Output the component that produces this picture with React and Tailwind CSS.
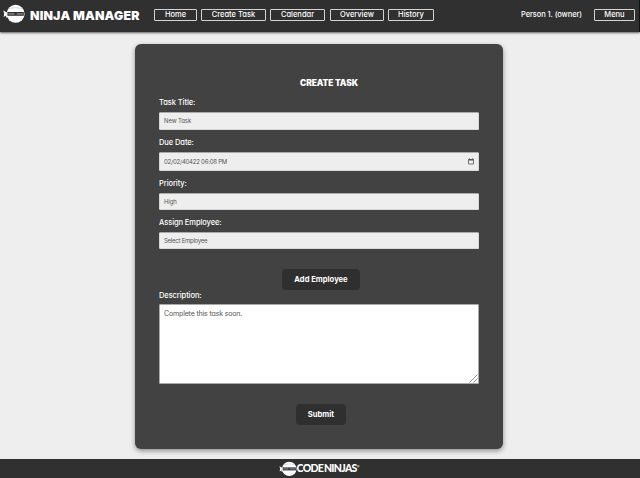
import React from 'react';

function NinjaHead({ className }) {
  return (
    <svg className={className} viewBox="0 0 22 20" fill="none">
      <path d="M5 9 L0.2 6.6 L1.2 9.5 L0.6 13 L3 11.5 L3.2 14 L6 11 Z" fill="#fff" />
      <circle cx="12.6" cy="9.8" r="9" fill="#fff" />
      <path d="M4.4 8 H20.8 V11.8 H4.4 Z" fill="#303030" />
      <path d="M5.4 9.3 H19.8 V10.5 H5.4 Z" fill="#999" />
      <path d="M11.4 9 H13.8 V10.8 H11.4 Z" fill="#303030" />
      <path d="M6 4.5 Q12.6 2.8 19.5 4.5" stroke="#bbb" strokeWidth="0.6" />
    </svg>
  );
}

const navItems = [
  { label: 'Home', width: 'w-[43px]', gap: '' },
  { label: 'Create Task', width: 'w-[65px]', gap: 'ml-1' },
  { label: 'Calendar', width: 'w-[55px]', gap: 'ml-1' },
  { label: 'Overview', width: 'w-[54px]', gap: 'ml-[5px]' },
  { label: 'History', width: 'w-[46px]', gap: 'ml-1' },
];

function NavButton({ children, className }) {
  return (
    <button className={`flex h-3 shrink-0 items-center justify-center rounded-[1px] border border-[#d4d4d4] text-[7.5px] leading-none font-medium whitespace-nowrap text-white ${className}`}>
      {children}
    </button>
  );
}

function Label({ children, className }) {
  return <label className={`block h-3 text-[7.5px] leading-[14px] font-medium tracking-[-0.08px] text-white ${className}`}>{children}</label>;
}

function Field({ children, className }) {
  return (
    <div className={`flex items-center justify-between rounded-[1.5px] border border-[#d8d8d8] border-t-[#aaa] bg-[#eee] px-1 text-[6px] leading-none tracking-[-0.12px] text-[#555] ${className}`}>
      {children}
    </div>
  );
}

function ActionButton({ children, className }) {
  return (
    <button className={`mx-auto flex h-[21px] items-center justify-center rounded-[4px] bg-[#2f2f2f] text-[7.6px] leading-none font-bold text-white ${className}`}>
      {children}
    </button>
  );
}

export default function App() {
  return (
    <div className="flex h-[478px] w-[640px] flex-col overflow-hidden bg-[#eee] font-['Inter','Open_Sans',sans-serif] [font-feature-settings:'cv11']">
      <header className="flex h-8 shrink-0 items-center border-r border-[#111] bg-[#303030] pr-[4px] pb-[2px] pl-[3px] shadow-[0_1px_2px_rgba(0,0,0,0.6)]">
        <NinjaHead className="-mt-[2px] h-5 w-[22px] shrink-0" />
        <h1 className="ml-[5px] w-[124px] shrink-0 pt-[2px] text-[12.3px] leading-none font-black tracking-[0.2px] whitespace-nowrap text-white">NINJA MANAGER</h1>
        <nav className="flex">
          {navItems.map((item) => (
            <NavButton key={item.label} className={`${item.width} ${item.gap}`}>{item.label}</NavButton>
          ))}
        </nav>
        <span className="mr-3 ml-auto text-[7.5px] leading-none font-medium tracking-[-0.08px] text-white">Person 1. (owner)</span>
        <NavButton className="w-[41px]">Menu</NavButton>
      </header>

      <main className="flex-1 pt-3">
        <form className="mx-auto h-[405px] w-[368px] -translate-x-px rounded-[6px] bg-[#424242] px-6 pt-8 shadow-[0_2px_5px_rgba(0,0,0,0.4)]">
          <h2 className="h-4 pl-[20px] text-center text-[8.4px] leading-[15px] font-black tracking-[-0.06px] text-white">CREATE TASK</h2>
          <Label className="mt-[4px]">Task Title:</Label>
          <Field className="mt-1 h-[18px]">New Task</Field>
          <Label className="mt-[6px]">Due Date:</Label>
          <Field className="mt-1 h-[19px]">
            <span className="tracking-[-0.22px]">02/02/40422 06:08 PM</span>
            <svg className="h-[7px] w-[6px]" viewBox="0 0 6 7" fill="none">
              <path d="M0.5 1.5 H5.5 V6 H0.5 Z M1.5 0.3 V1.5 M4.5 0.3 V1.5" stroke="#555" strokeWidth="0.8" />
              <path d="M0.5 1 H5.5 V2.5 H0.5 Z" fill="#555" />
            </svg>
          </Field>
          <Label className="mt-[6px]">Priority:</Label>
          <Field className="mt-1 h-[17px]">High</Field>
          <Label className="mt-[6px]">Assign Employee:</Label>
          <Field className="mt-1 h-[17px]"><span className="tracking-[-0.25px]">Select Employee</span></Field>
          <ActionButton className="mt-5 w-[78px] translate-x-[2px]">Add Employee</ActionButton>
          <Label className="-mt-px">Description:</Label>
          <div className="mt-[3px] flex h-20 justify-between rounded-[1px] border border-[#aaa] bg-white pt-[3px] pl-1">
            <span className="text-[7px] leading-[11px] tracking-[-0.15px] text-[#555]">Complete this task soon.</span>
            <svg className="h-[9px] w-[9px] self-end" viewBox="0 0 9 9">
              <path d="M0.5 8.5 L8.5 0.5 M4.5 8.5 L8.5 4.5" stroke="#777" strokeWidth="0.8" />
            </svg>
          </div>
          <ActionButton className="mt-5 w-[50px] translate-x-[2px]">Submit</ActionButton>
        </form>
      </main>

      <footer className="flex h-[19px] shrink-0 items-center justify-center bg-[#303030] pr-[2px]">
        <NinjaHead className="h-4 w-[18px] shrink-0" />
        <span className="font-['Lato',sans-serif] text-[10.5px] leading-none font-black tracking-[-0.7px] [word-spacing:-1px] whitespace-nowrap text-white">CODE NINJAS</span>
        <span className="mb-1 text-[4px] leading-none text-white">®</span>
      </footer>
    </div>
  );
}
